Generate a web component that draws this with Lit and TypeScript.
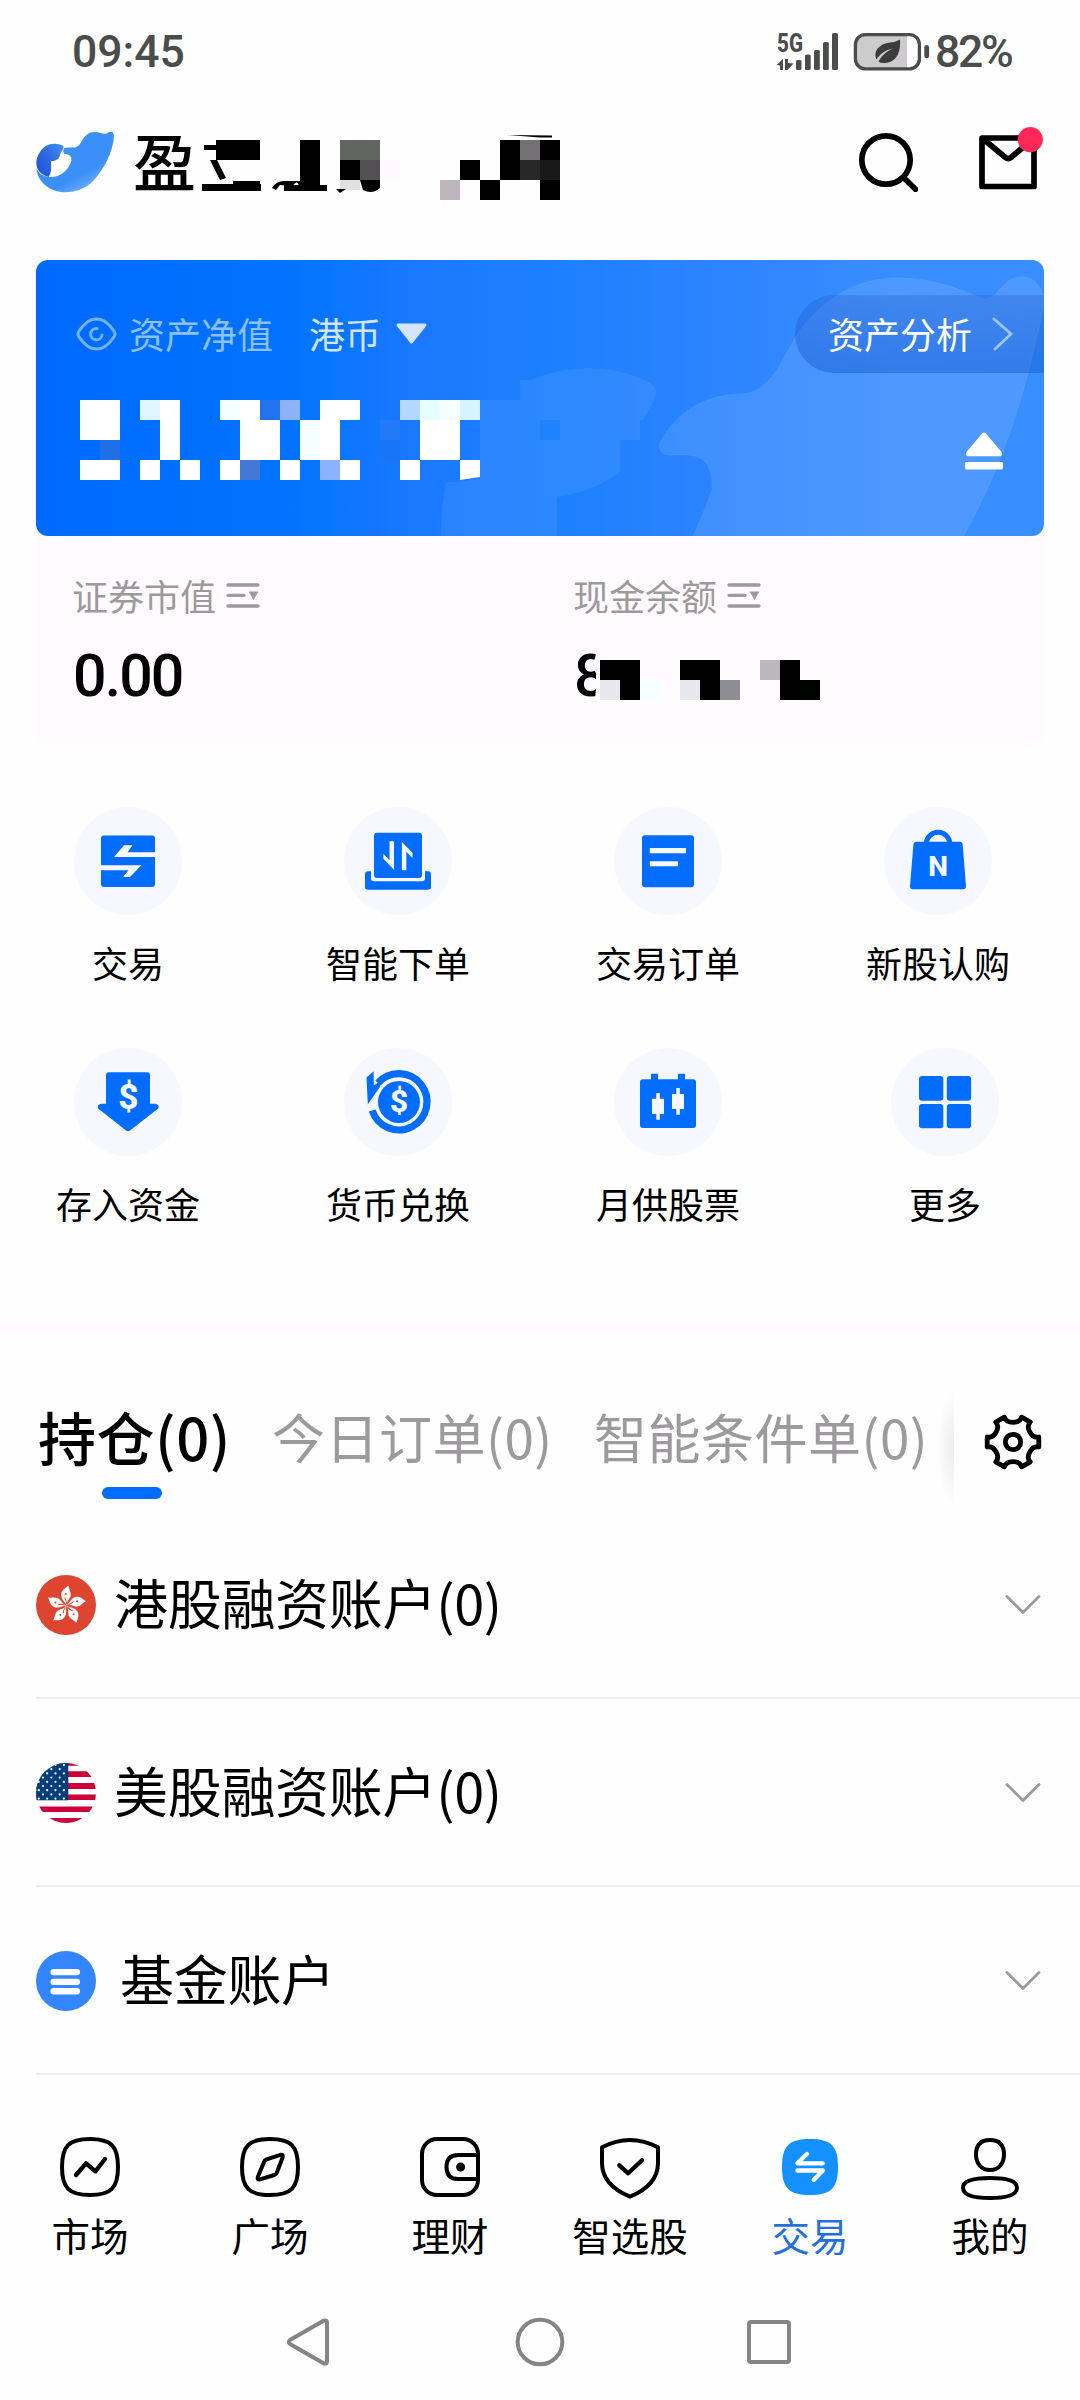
import { LitElement, html, svg, css } from "lit";
import { customElement } from "lit/decorators.js";

type Cell = [number, number, number, number, string];

const W = "#ffffff";
const K = "#000000";

const cells = (list: Cell[]) =>
  list.map(([x, y, w, h, f]) => svg`<rect x=${x} y=${y} width=${w} height=${h} fill=${f} shape-rendering="crispEdges"></rect>`);

/* Redaction blocks beside the brand name; origin at page (200,130). */
const titleCells: Cell[] = [
  [16, 10, 44, 20, K], [4, 15, 14, 5, K], [2, 54, 59, 7, K], [33, 51, 27, 4, K],
  [100, 10, 20, 48, K], [84, 55, 43, 6, K],
  [140, 10, 40, 20, "#636563"], [140, 30, 20, 20, K], [160, 30, 20, 20, "#525052"],
  [140, 50, 20, 10, "#e0e0e0"], [180, 30, 20, 20, "#fffaff"],
  [240, 50, 20, 20, "#bdb6bd"], [260, 30, 20, 20, K], [280, 50, 20, 20, K],
  [300, 10, 20, 40, K], [320, 10, 20, 20, "#737173"], [340, 10, 20, 20, K],
  [320, 30, 20, 20, "#292829"], [340, 30, 20, 20, "#181818"], [340, 50, 20, 20, K],
];

/* Redaction blocks over the net value; origin at page (80,400). */
const amountCells: Cell[] = [
  [0, 0, 40, 40, W], [60, 0, 20, 20, "#e1f5ff"], [80, 0, 20, 60, W], [140, 0, 20, 20, "#f5ffff"], [160, 0, 20, 20, W],
  [180, 0, 20, 20, "#2173ef"], [200, 0, 20, 20, "#8cb2f7"], [240, 0, 40, 20, W], [320, 0, 20, 20, "#b5d7ff"],
  [340, 0, 20, 20, "#e6ffff"], [360, 0, 20, 20, "#f5ffff"], [380, 0, 20, 20, "#d6f3ff"],
  [160, 20, 40, 40, W], [220, 20, 20, 40, "#f5ffff"], [240, 20, 20, 40, W], [300, 20, 20, 20, "#2379f8"],
  [340, 20, 40, 40, W], [20, 40, 20, 20, "#216fe7"], [300, 40, 20, 20, "#1875f8"],
  [0, 60, 40, 20, W], [60, 60, 20, 20, W], [100, 60, 20, 20, W], [140, 60, 20, 20, W], [160, 60, 20, 20, "#4279d6"],
  [200, 60, 20, 20, W], [240, 60, 20, 20, "#8cb2ff"], [260, 60, 20, 20, W], [320, 60, 20, 20, W],
];

/* Redaction blocks over the cash balance; origin at page (600,660). */
const cashCells: Cell[] = [
  [0, 0, 40, 20, K], [0, 20, 20, 20, "#e6e7ef"], [20, 20, 20, 20, K], [40, 20, 20, 20, "#f5ffff"],
  [80, 0, 40, 20, K], [80, 20, 20, 20, "#e6e7ef"], [100, 20, 20, 20, K], [120, 20, 20, 20, "#8c8e94"],
  [160, 0, 20, 20, "#bdb6bd"], [180, 0, 20, 40, K], [200, 20, 20, 20, "#000400"],
];

const B = "#006dff";
const P = "#f7f7ff";

const actions = [
  { label: "交易", icon: svg`<rect x="27" y="28.5" width="54" height="51.5" rx="3" fill=${B}/><path fill=${P} d="M40 50L50 38.3H58.5L53.5 45.3H82V50ZM26 58.3H67.5L56 70H49L54.5 63.3H26Z"/>` },
  { label: "智能下单", icon: svg`<rect x="30" y="25.7" width="48" height="45.3" rx="3" fill=${B}/><path fill=${B} d="M21 67q0-2.7 3-2.7h3v7q0 3 3 3h48q3 0 3-3v-7h3q3 0 3 2.7v13q0 2.7-3 2.7H24q-3 0-3-2.7z"/><path fill=${P} d="M45.5 34.3H50V62.7L39.3 51.7V46.7L45.5 53.3ZM57.9 35L68.5 45.7V51L62.3 44.7V63.3H57.9Z"/>` },
  { label: "交易订单", icon: svg`<rect x="28" y="28.3" width="52" height="52" rx="3" fill=${B}/><path fill=${P} d="M35.8 41H72v5.3H35.8zM35.8 54.3H64v5H35.8z"/>` },
  { label: "新股认购", icon: svg`<path fill=${B} d="M32.6 34.7H75.5q3 0 3.2 3L82 79.3q.2 3-3 3H29q-3.2 0-3-3L29.4 37.7q.2-3 3.2-3z"/><path fill="none" stroke=${B} stroke-width="5" d="M42.3 37V36a11.8 11.8 0 0 1 23.5 0v1"/><text x="54" y="68.7" text-anchor="middle" class="glyph" font-size="28" fill=${P}>N</text>` },
  { label: "存入资金", icon: svg`<path fill=${B} d="M35 24.3H73q3 0 3 3V55.7h5.5q5 1.5 2.4 5L56 82.5q-2 1.5-4 0L24.5 60.7q-2.6-3.5 2.4-5H32V27.3q0-3 3-3z"/><text x="54.3" y="61" text-anchor="middle" class="glyph" font-size="35" fill=${P}>$</text>` },
  { label: "货币兑换", icon: svg`<path fill="none" stroke=${B} stroke-width="7.2" d="M34 35A28.1 28.1 0 1 1 28.2 62.5"/><path fill=${B} d="M29.6 23.3L22.5 29.5 23.8 56.5 35.5 39.5 38 32 29.8 37.5Z"/><circle cx="55" cy="54" r="21" fill=${B}/><text x="55" y="64.3" text-anchor="middle" class="glyph" font-size="32" fill=${P}>$</text>` },
  { label: "月供股票", icon: svg`<path fill=${B} d="M37 25.7h7v8h-7zM64 25.7h7v8h-7z"/><rect x="26" y="31.3" width="56" height="48.7" rx="3" fill=${B}/><path fill=${P} d="M38 50.7h4.3V45h3.5v5.7H50V66h-4.2v5.7h-3.5V66H38zM58 46h4.3v-6h3.5v6H70v15h-4.2v5.7h-3.5V61H58z"/>` },
  { label: "更多", icon: svg`<g fill=${B}><rect x="28" y="28" width="24.3" height="24.7" rx="3"/><rect x="55.8" y="28" width="24.3" height="24.7" rx="3"/><rect x="28" y="56" width="24.3" height="24.3" rx="3"/><rect x="55.8" y="56" width="24.3" height="24.3" rx="3"/></g>` },
];

const squircle = "M30 2C51 2 58 9 58 30S51 58 30 58 2 51 2 30 9 2 30 2Z";

const navItems = [
  { label: "市场", icon: svg`<path d=${squircle}/><path d="M16 38L26 26.3 35.5 34.3 45 22" stroke-width="4.3"/>` },
  { label: "广场", icon: svg`<path d=${squircle}/><path d="M40.5 17.8L26.5 22.3Q24.6 23 24 25L17.8 40Q17 43.3 20 42.4L34.5 38Q36.3 37.3 37 35.3L42.6 20.5Q43.5 17 40.5 17.8Z"/>` },
  { label: "理财", icon: svg`<rect x="2" y="2" width="56" height="56" rx="15"/><path d="M58 18H38Q26.5 18 26.5 30T38 42H58"/><circle cx="40.6" cy="30" r="4.5" fill="currentColor" stroke="none"/>` },
  { label: "智选股", icon: svg`<path d="M2 10.3Q30-4.3 58 10.3V26Q58 48 30 59.7 2 48 2 26Z"/><path d="M19.3 28.3L28.2 36.3 42 23.3" stroke-width="4.3"/>` },
  { label: "交易", active: true, icon: svg`<path d=${squircle} fill="#1490ff" stroke="none"/><path d="M27 17L17.4 26.3H42.8M17.4 33.5H42.8L33.7 43" stroke="#fff" stroke-width="4.3"/>` },
  { label: "我的", icon: svg`<path d="M30 3C40 3 44 9 44 17.5S39 33 30 33 16 26 16 17.5 20 3 30 3Z"/><path d="M30 41C48 41 57 44 57 50.7S48 61 30 61 3 57.5 3 50.7 12 41 30 41Z"/>` },
];

const rot = (x: number, y: number, deg: number) => {
  const a = (deg * Math.PI) / 180;
  return `${(x * Math.cos(a) - y * Math.sin(a)).toFixed(2)} ${(x * Math.sin(a) + y * Math.cos(a)).toFixed(2)}`;
};

/* Six-tooth gear: each step draws a tooth tip, then the valley after it. */
const gearPath = () => {
  let d = `M${rot(25.8, -5, 0)}`;
  for (let t = 0; t < 360; t += 60) {
    d += `L${rot(25.8, 5, t)}C${rot(17.8, -6.5, t + 30)} ${rot(17.8, 6.5, t + 30)} ${rot(25.8, -5, t + 60)}`;
  }
  return d + "Z";
};

const flagHK = svg`<circle cx="30" cy="30" r="30" fill="#de4531"/>
  ${[12, 84, 156, 228, 300].map((a) => svg`<g transform="translate(30.5 30.5) rotate(${a})"><path fill="#fff" d="M0 0C-1.500-3-7-5-7.500-10-8-14.500-4-17.500-2-20-1.500-16.500 2-14.500 2-10.500 2-7-1-5 0 0Z"/><path d="M-.5-2Q-1-5-3.500-7.500" fill="none" stroke="#de4531" stroke-width="1"/><circle cx="-3" cy="-11" r="1" fill="#de4531"/></g>`)}`;

const stars: [number, number][] = [];
for (let r = 0; r < 9; r++) {
  const odd = r % 2 === 1;
  for (let c = 0; c < (odd ? 3 : 4); c++) stars.push([(odd ? 7 : 2.8) + c * 8.35, 2 + r * 4.2]);
}

const flagUS = svg`<clipPath id="us"><circle cx="30" cy="30" r="30"/></clipPath><g clip-path="url(#us)">
  <rect width="60" height="60" fill="#fff"/>
  <path fill="#ce0039" d="M0 0H60V2.7H0zM0 8.3H60V14H0zM0 20H60v6H0zM0 31.5H60V37H0zM0 43.5H60V49H0zM0 55H60v5H0z"/>
  <rect width="32.3" height="37.3" fill="#003d7b"/>
  ${stars.map(([x, y]) => svg`<circle cx=${x} cy=${y} r="1.1" fill="#fff"/>`)}</g>`;

const fund = svg`<circle cx="30" cy="30" r="30" fill="#3386ff"/><g fill="#fff"><rect x="14.5" y="18" width="29.5" height="6.3" rx="3"/><rect x="14.5" y="27.7" width="29.5" height="6.3" rx="3"/><rect x="14.5" y="37" width="29.5" height="6.5" rx="3"/></g>`;

const accounts = [
  { label: "港股融资账户(0)", icon: flagHK, wide: false },
  { label: "美股融资账户(0)", icon: flagUS, wide: false },
  { label: "基金账户", icon: fund, wide: true },
];

const detailIcon = html`<svg width="34" height="26" viewBox="0 0 34 26"><g stroke="#9c9a9c" stroke-width="3.3" stroke-linecap="round"><path d="M2 3H32M2 13.3H18M2 24H32"/></g><path d="M22.5 9.5H32.5L27.5 18Z" fill="#9c9a9c"/></svg>`;

@customElement("app-root")
export class AppRoot extends LitElement {
  static styles = css`
    :host { display: block; width: 1080px; height: 2400px; overflow: hidden; background: #fefefe; color: #000;
      font-family: "Noto Sans CJK SC", sans-serif; }
    * { box-sizing: border-box; }
    svg { display: block; flex: none; }
    .glyph { font-family: Roboto, sans-serif; font-weight: 800; }
    .status { height: 100px; display: flex; align-items: center; padding: 3px 66px 0 72px; color: #4a4d4a;
      font: 500 44.5px/60px Roboto, sans-serif; }
    .time { flex: 1; }
    .pct { letter-spacing: -2.3px; margin-left: 5px; width: 79px; white-space: nowrap; }
    .tiny { font-family: Roboto, sans-serif; font-weight: 800; }
    .header { height: 160px; display: flex; align-items: flex-start; padding: 30px 36px 0; }
    .logo { margin-top: 2px; }
    .brand { font-size: 63px; line-height: 62px; font-weight: 500; width: 67px; margin: -2px 0 0 17px; }
    .spacer { flex: 1; }
    .mail { margin-left: 60px; }
    .card { margin: 0 36px; height: 276px; border-radius: 12px; overflow: hidden; display: grid; color: #fff;
      background: linear-gradient(90deg, #006aff 0%, #0073ff 24%, #1a79ff 38%, #1c80ff 52%, #2a83ff 65%, #388dff 85%, #398eff 100%); }
    .art, .content { grid-area: 1 / 1; }
    .content { display: flex; flex-direction: column; }
    .top { display: flex; align-items: center; height: 78px; margin-top: 35px; padding-left: 40px; font-size: 36px; line-height: 50px; }
    .top span { margin-top: -3px; }
    .top .muted { color: #8cc0ff; margin-left: 12px; }
    .top .cur { color: #d0e5ff; margin-left: 36px; margin-right: 14px; }
    .pill { margin-left: auto; width: 249px; height: 78px; border-radius: 39px 0 0 39px; display: flex; align-items: center;
      gap: 20px; padding-left: 33px; background: linear-gradient(180deg, rgba(30, 80, 190, .25), rgba(10, 80, 200, .4)); }
    .worth { display: flex; justify-content: space-between; padding: 27px 41px 0 44px; }
    .eject { margin-top: 32px; }
    .panel { margin: 0 36px; height: 210px; background: #fffbff; border-radius: 0 0 12px 12px; display: grid;
      grid-template-columns: 501px 1fr; padding: 34px 0 0 36px; }
    .lab { display: flex; align-items: center; gap: 10px; height: 50px; font-size: 36px; color: #9c9a9c; line-height: 50px; }
    .val { display: flex; height: 70px; margin: 21px 0 0 1px; font: 500 59px/70px Roboto, sans-serif; letter-spacing: -1.9px; }
    .cash { margin: 13px 0 0 -14px; }
    .actions { display: grid; grid-template-columns: repeat(4, 270px); grid-auto-rows: 241px; margin: 61px 0 0 -7px; height: 512px; }
    .action { display: flex; flex-direction: column; align-items: center; font-size: 36px; line-height: 50px; gap: 22px; }
    .action:last-child { padding-left: 14px; }
    .disc { width: 108px; height: 108px; border-radius: 50%; background: #f7f7ff; }
    .band { height: 18px; background: #fffbff; }
    .tabs { height: 174px; display: flex; align-items: flex-start; padding: 59px 37px 0 38px; }
    .tab { font-size: 53px; line-height: 80px; color: #9c9a9c; white-space: nowrap; letter-spacing: .5px; }
    .on { width: 234px; font-size: 58px; font-weight: 500; color: #000; }
    .bar { width: 60px; height: 12px; border-radius: 6px; background: #006dff; margin: 11px 0 0 64px; }
    .second { width: 322px; }
    .third { width: 343px; }
    .fade { width: 17px; height: 110px; margin-top: -3px; background: radial-gradient(ellipse 17px 55px at 100% 50%, #ecebee, #fefefe); }
    .gear { margin: 16px 0 0 29px; }
    .row { height: 188px; margin-left: 36px; border-bottom: 2px solid #efefef; display: flex; align-items: center;
      padding: 1px 38px 0 0; font-size: 54px; line-height: 70px; }
    .name { flex: 1; margin: -5px 0 0 18px; letter-spacing: -.3px; }
    .wide { margin-left: 24px; }
    .nav { display: grid; grid-template-columns: repeat(6, 1fr); height: 210px; padding-top: 62px; }
    .item { display: flex; flex-direction: column; align-items: center; font-size: 38.5px; line-height: 50px; gap: 12px; }
    .item svg { overflow: visible; }
    .active { color: #2170de; }
    .keys { display: flex; justify-content: center; align-items: center; padding: 15px 0 0; height: 98px; }
    .back { margin-right: 185px; margin-left: -4px; }
    .recent { margin-left: 182px; }
  `;

  render() {
    return html`
      <div class="status">
        <span class="time">09:45</span>
        <svg width="158" height="44" viewBox="772 29 158 44" fill="#4a4d4a">
          <text x="777" y="51" class="tiny" font-size="26" textLength="26" lengthAdjust="spacingAndGlyphs">5G</text>
          <path d="M776.5 64L783 58V69H780V64.5ZM785 58H788V62L793.5 62.5 787.5 69H785Z"/>
          <rect x="796" y="59" width="5.5" height="10" rx="1.5"/><rect x="805" y="53.5" width="5.7" height="15.5" rx="1.5"/>
          <rect x="814" y="49" width="5.8" height="20" rx="1.5"/><rect x="823" y="41" width="5.8" height="28" rx="1.5"/>
          <rect x="832" y="32" width="6" height="37" rx="1.5"/>
          <path d="M866 34H907V68H866Q856 68 856 58V44Q856 34 866 34Z" fill="#cecbce"/>
          <rect x="855.4" y="33.6" width="64" height="34.3" rx="10" fill="none" stroke="#4a4d4a" stroke-width="3.3"/>
          <rect x="924.3" y="44" width="4.8" height="13.5" rx="2.4"/>
          <path fill="#3a3d3a" d="M900 38.5C901 52 896 62 884 62Q880 62 878.5 60.5C882 54 887 50 893 47.5 885 49 880 53 876.5 58.5 872 47 884 42 890 41.5Q896 41 900 38.5Z"/>
        </svg>
        <span class="pct">82%</span>
      </div>

      <div class="header">
        <svg class="logo" width="80" height="62" viewBox="0 0 80 62">
          <defs>
            <linearGradient id="lg1" x1="0" y1="1" x2="1" y2="0"><stop offset="0" stop-color="#1c4fd4"/><stop offset=".5" stop-color="#2f66e0"/><stop offset="1" stop-color="#4094f5"/></linearGradient>
            <linearGradient id="lg2" x1=".45" y1=".4" x2=".75" y2=".85"><stop offset=".6" stop-color="#3a90f8"/><stop offset="1" stop-color="#69a8ff"/></linearGradient>
          </defs>
          <path fill="url(#lg1)" d="M27.5 14C18 9 8 13 4 20-3 30 0 42 12.5 45 16 40 15 35 15 29 20 29 23 27 24 23 25 19 28 18 27.5 14Z"/>
          <path fill="url(#lg2)" d="M28.5 16C33 14 40 18 44 12 48 4 52 0 59 0 65 0 69 4 73 0 76-1 78 1 78 4 77 20 68 37 58 48 48 59 34 61 25 60 12 58 1 49 .5 36 3 42 7 44 12.5 45 25 46 33 37 35.3 29 36 25 34 22 28.5 22Q26 19 28.5 16Z"/>
        </svg>
        <div class="brand">盈</div>
        <svg width="370" height="72" viewBox="0 0 370 72">
          ${cells(titleCells)}
          <path d="M10 30H17L26 48 20 50ZM72 58Q76 51 84 51H98L92 56 80 55 76 60ZM96 51L101 51 101 58ZM160 50H180V58Q172 65 163 60ZM136 59H146L140 63ZM307 5L352 5.5V7.5H340Z"/>
        </svg>
        <div class="spacer"></div>
        <svg width="60" height="62" viewBox="858 130 60 62" fill="none" stroke="#000" stroke-width="5.7" stroke-linecap="round">
          <circle cx="886" cy="160" r="24.2"/><path d="M904.5 178.5L915.5 189.3"/>
        </svg>
        <svg class="mail" width="66" height="66" viewBox="978 126 66 66" fill="none" stroke="#000" stroke-width="5.7" stroke-linejoin="round" overflow="visible">
          <g transform="translate(0 -4)"><rect x="982" y="138" width="52" height="48.5"/><path d="M982 138L1005.5 157.5Q1008.3 159.5 1011 157.5L1034 138"/>
          <circle cx="1030.3" cy="139.6" r="12.6" fill="#ff2859" stroke="none"/></g>
        </svg>
      </div>

      <div class="card">
        <svg class="art" width="1008" height="276" viewBox="36 260 1008 276">
          <path fill="#fff" fill-opacity=".07" d="M441 536Q441 505 446 482H460L480 478V400H520V380H532Q558 368 588 368 625 369 650 383 659 389 655 399L643 420H640V440H620V471Q595 492 557 497L557 536Z"/>
          <path fill="#0a78ff" fill-opacity=".35" d="M540 420H560V440H540Z"/>
          <path fill="#fff" fill-opacity=".1" stroke="#fff" stroke-opacity=".08" d="M693 537Q706 507 712 490 714 456 688 455H669Q657 453 660 443C672 419 698 394 743 394 770 391 780 364 795 338 812 312 845 278 897 278 935 278 960 290 974 295Q988 303 995 295C1006 281 1013 277 1022 277 1034 277 1041 286 1044 298Q1042 320 1036 340 1012 450 963 537Z"/>
        </svg>
        <div class="content">
          <div class="top">
            <svg width="41" height="34" viewBox="0 0 41 34" fill="none" stroke="#74b2ff" stroke-width="3" stroke-linecap="round"><path d="M20.5 2C27 2 30 5 34 9L38 14Q40 17 38 20L34 25C30 29 27 32 20.5 32S11 29 7 25L3 20Q1 17 3 14L7 9C11 5 14 2 20.5 2Z"/><path d="M21 11.5A5.7 5.7 0 1 0 26 18"/></svg>
            <span class="muted">资产净值</span><span class="cur">港币</span>
            <svg width="33" height="22" viewBox="0 0 33 22"><path d="M3 2H30L16.5 19Z" fill="#d6e5ff" stroke="#d6e5ff" stroke-width="3" stroke-linejoin="round"/></svg>
            <div class="pill"><span>资产分析</span><svg width="22" height="34" viewBox="0 0 22 34"><path d="M2 2L19 17 3 32" fill="none" stroke="#9cc4ff" stroke-width="3" stroke-linecap="round" stroke-linejoin="round"/></svg></div>
          </div>
          <div class="worth">
            <svg width="410" height="82" viewBox="0 0 410 82">${cells(amountCells)}<path fill="#fff" d="M380 60H400V77L380 80Z"/></svg>
            <svg class="eject" width="38" height="38" viewBox="0 0 38 38" fill="#fff"><path d="M17 1.5Q19-.5 21 1.5L36.5 20Q38 24 35 24.3H3Q0 24 1.5 20Z"/><rect y="30" width="38" height="7.5" rx="1.5"/></svg>
          </div>
        </div>
      </div>

      <div class="panel">
        <div><div class="lab"><span>证券市值</span>${detailIcon}</div><div class="val">0.00</div></div>
        <div><div class="lab"><span>现金余额</span>${detailIcon}</div>
          <div class="val"><span>8</span><svg class="cash" width="234" height="46" viewBox="-8 -6 234 46"><path fill="#fffbff" d="M0-6H-4L-8 8-3 14-5 40H0Z"/><rect x="-4" y="-6" width="16" height="46" fill="#fffbff"/>${cells(cashCells)}</svg></div></div>
      </div>

      <div class="actions">
        ${actions.map((a) => html`<div class="action"><svg class="disc" viewBox="0 0 108 108">${a.icon}</svg><span>${a.label}</span></div>`)}
      </div>

      <div class="band"></div>

      <div class="tabs">
        <div class="tab on">持仓(0)<div class="bar"></div></div>
        <div class="tab second">今日订单(0)</div>
        <div class="tab third">智能条件单(0)</div>
        <div class="fade"></div>
        <svg class="gear" width="60" height="60" viewBox="-30 -30 60 60" fill="none" stroke="#000" stroke-width="4.8" stroke-linejoin="round"><path d=${gearPath()}/><circle r="7.7"/></svg>
      </div>

      ${accounts.map((a) => html`<div class="row">
        <svg width="60" height="60" viewBox="0 0 60 60">${a.icon}</svg>
        <span class="name ${a.wide ? "wide" : ""}">${a.label}</span>
        <svg width="38" height="22" viewBox="0 0 38 22"><path d="M3 2.5L19 18.5 35 2.5" fill="none" stroke="#9c9a9c" stroke-width="2.8" stroke-linecap="round" stroke-linejoin="round"/></svg>
      </div>`)}

      <div class="nav">
        ${navItems.map((n) => html`<div class="item ${n.active ? "active" : ""}">
          <svg width="60" height="60" viewBox="0 0 60 60" fill="none" stroke="currentColor" stroke-width="4" stroke-linecap="round" stroke-linejoin="round">${n.icon}</svg>
          <span>${n.label}</span></div>`)}
      </div>

      <div class="keys">
        <svg class="back" width="44" height="50" viewBox="0 0 44 50"><path d="M38 3.5L4 23Q1.5 25 4 27L38 46.5Q41 47 41 44.5V5.5Q41 3 38 3.5Z" fill="none" stroke="#848684" stroke-width="4"/></svg>
        <svg width="50" height="50" viewBox="0 0 50 50"><circle cx="25" cy="25" r="22.3" fill="none" stroke="#848684" stroke-width="4"/></svg>
        <svg class="recent" width="44" height="44" viewBox="0 0 44 44"><rect x="2" y="2" width="40" height="40" rx="2" fill="none" stroke="#848684" stroke-width="4"/></svg>
      </div>
    `;
  }
}
